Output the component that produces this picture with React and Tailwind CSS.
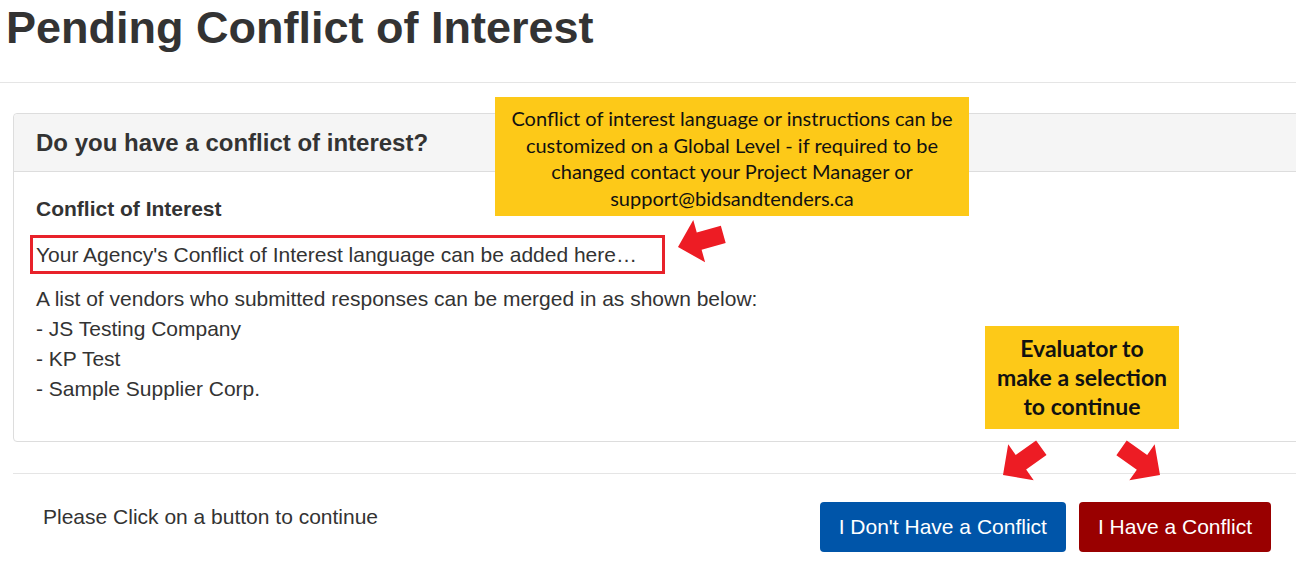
import React from "react"

// Block arrow pointing along +x with its tip at the origin
const ARROW_POINTS = "0,0 -22,-22 -22,-9 -47,-9 -47,9 -22,9 -22,22"

const arrows = [
  { x: 678, y: 247, angle: 164.4 },
  { x: 1003, y: 475, angle: 144.6 },
  { x: 1160, y: 475, angle: 35.1 },
]

const vendors = ["JS Testing Company", "KP Test", "Sample Supplier Corp."]

export default function App() {
  return (
    <div className="relative w-[1296px] h-[567px] overflow-hidden bg-white text-[#333] font-['Liberation_Sans',Arial,sans-serif]">
      {/* Page title */}
      <div className="h-[83px] border-b border-[#e5e5e5]">
        <h1 className="pl-[6px] pt-[3px] text-[45px] leading-[50px] font-bold">Pending Conflict of Interest</h1>
      </div>

      {/* Question panel */}
      <div className="ml-[13px] mt-[30px] w-[1320px] border border-[#dddddd] rounded-[4px]">
        <div className="h-[58px] flex items-center px-[22px] bg-[#f5f5f5] border-b border-[#dddddd] rounded-t-[4px]">
          <h2 className="text-[24px] font-bold leading-none">Do you have a conflict of interest?</h2>
        </div>
        <div className="px-[22px] pt-[22px] pb-[37px] text-[21px] leading-[30px]">
          <div className="font-bold">Conflict of Interest</div>
          <div className="mt-[11px] -ml-[6px] w-[635px] h-[39px] border-[3px] border-[#e8222a] pl-[3px] flex items-center">
            Your Agency's Conflict of Interest language can be added here…
          </div>
          <div className="mt-[10px]">A list of vendors who submitted responses can be merged in as shown below:</div>
          {vendors.map((v) => (
            <div key={v}>- {v}</div>
          ))}
        </div>
      </div>

      {/* Footer with actions */}
      <div className="ml-[13px] mt-[31px] border-t border-[#e5e5e5] flex justify-between items-start pt-[28px] pl-[30px] pr-[25px]">
        <div className="text-[21px] leading-[30px]">Please Click on a button to continue</div>
        <div className="flex gap-[13px]">
          <button className="h-[50px] px-[19px] rounded-[4px] bg-[#0055a9] text-white text-[21px]">I Don't Have a Conflict</button>
          <button className="h-[50px] px-[19px] rounded-[4px] bg-[#990000] text-white text-[21px]">I Have a Conflict</button>
        </div>
      </div>

      {/* Annotation callouts */}
      <div className="absolute left-[495px] top-[97px] w-[474px] h-[119px] bg-[#fdc918] text-[#111] font-['Lato',sans-serif] text-[20px] leading-[26.7px] text-center pt-[8px]">
        <div>Conflict of interest language or instructions can be</div>
        <div>customized on a Global Level - if required to be</div>
        <div>changed contact your Project Manager or</div>
        <div>support@bidsandtenders.ca</div>
      </div>
      <div className="absolute left-[985px] top-[326px] w-[194px] h-[103px] bg-[#fdc918] text-[#111] font-['Lato',sans-serif] font-bold text-[23px] leading-[29px] text-center pt-[8px]">
        <div>Evaluator to</div>
        <div>make a selection</div>
        <div>to continue</div>
      </div>

      {/* Annotation arrows */}
      <svg className="absolute left-0 top-0 pointer-events-none" width="1296" height="567">
        {arrows.map((a, i) => (
          <polygon key={i} points={ARROW_POINTS} fill="#ed1c24" transform={`translate(${a.x} ${a.y}) rotate(${a.angle})`} />
        ))}
      </svg>
    </div>
  )
}
